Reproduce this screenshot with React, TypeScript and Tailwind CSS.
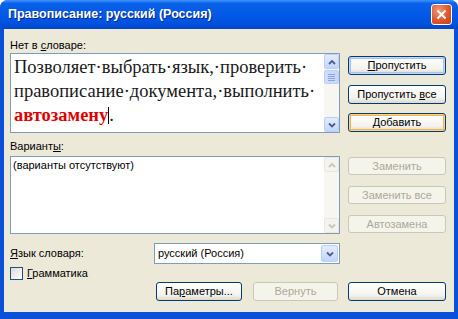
import type { ReactNode } from "react";

// XP-style spelling dialog

function Chevron({ dir, color }: { dir: "up" | "down"; color: string }) {
  return (
    <svg width="8" height="6" viewBox="0 0 8 6">
      <path
        d={dir === "up" ? "M1 5 L4 2 L7 5" : "M1 1.5 L4 4.5 L7 1.5"}
        fill="none"
        stroke={color}
        strokeWidth="1.8"
      />
    </svg>
  );
}

function ArrowBtn({ dir, disabled }: { dir: "up" | "down"; disabled?: boolean }) {
  return (
    <div
      className={
        disabled
          ? "h-[15px] flex items-center justify-center rounded-[2px] border border-[#e8e7e0] bg-[#f4f3ee]"
          : "h-[15px] flex items-center justify-center rounded-[2px] border border-[#bcd0f6] bg-[linear-gradient(180deg,#e4ecfd,#c3d5fc)]"
      }
    >
      <Chevron dir={dir} color={disabled ? "#c9c7ba" : "#4d6185"} />
    </div>
  );
}

function Scrollbar({ disabled }: { disabled?: boolean }) {
  return (
    <div className="w-[15px] shrink-0 flex flex-col bg-[#f7f6f1]">
      <ArrowBtn dir="up" disabled={disabled} />
      {!disabled && (
        <div className="h-[14px] mt-[1px] flex flex-col items-center justify-center gap-[1px] rounded-[2px] border border-[#bcd0f6] bg-[linear-gradient(90deg,#d0dcfc,#c6d6fc)]">
          <div className="w-[7px] h-[1px] bg-[#8ca4dc]" />
          <div className="w-[7px] h-[1px] bg-[#8ca4dc]" />
          <div className="w-[7px] h-[1px] bg-[#8ca4dc]" />
          <div className="w-[7px] h-[1px] bg-[#8ca4dc]" />
        </div>
      )}
      <div className="flex-1" />
      <ArrowBtn dir="down" disabled={disabled} />
    </div>
  );
}

function XpButton({
  children,
  kind = "normal",
  className = "",
}: {
  children: ReactNode;
  kind?: "normal" | "default" | "hover" | "disabled";
  className?: string;
}) {
  const base =
    "flex items-center justify-center rounded-[3px] border text-[11px] leading-none ";
  const styles = {
    normal:
      "border-[#003c74] text-black bg-[linear-gradient(180deg,#ffffff,#f4f3ee_70%,#dcd8cc)]",
    default:
      "border-[#003c74] text-black bg-[linear-gradient(180deg,#ffffff,#f4f3ee_70%,#dcd8cc)] shadow-[inset_0_0_0_1px_#c2d6f7,inset_0_0_0_2px_#a6c2f2]",
    hover:
      "border-[#003c74] text-black bg-[linear-gradient(180deg,#ffffff,#f4f3ee_70%,#dcd8cc)] shadow-[inset_0_0_0_1px_#fcd38a,inset_0_0_0_2px_#f3b34d]",
    disabled: "border-[#c9c7ba] text-[#aca899] bg-[#f5f4ea]",
  };
  return <div className={base + styles[kind] + " " + className}>{children}</div>;
}

export default function App() {
  return (
    <div
      className="w-[458px] h-[319px] bg-white"
      style={{ fontFamily: '"Liberation Sans", Arial, sans-serif' }}
    >
      <div className="w-full h-full flex flex-col rounded-t-[8px] overflow-hidden bg-[#0a50d8]">
        {/* Title bar */}
        <div className="h-[29px] flex items-center justify-between pl-[8px] pr-[6px] bg-[linear-gradient(180deg,#3d95ff_0%,#0a61e8_12%,#0058e6_55%,#0050dc_85%,#0046c8_100%)]">
          <span className="text-white font-bold text-[12.5px] [text-shadow:1px_1px_0_#0a2a80]">
            Правописание: русский (Россия)
          </span>
          <div className="w-[21px] h-[21px] rounded-[3px] border border-white flex items-center justify-center bg-[radial-gradient(circle_at_35%_30%,#f19a7a,#e0562c_55%,#c5401a)]">
            <svg width="11" height="11" viewBox="0 0 11 11">
              <path d="M1.5 1.5 L9.5 9.5 M9.5 1.5 L1.5 9.5" stroke="white" strokeWidth="2" />
            </svg>
          </div>
        </div>

        {/* Body */}
        <div className="flex-1 mx-[4px] mb-[7px] bg-[#ece9d8] pt-[9px] pl-[6px] pr-[8px] text-[11px] text-black">
          <div className="flex gap-[8px]">
            {/* left column */}
            <div className="w-[330px] flex flex-col">
              <div className="h-[14px] leading-[14px]">
                Нет в <span className="underline">с</span>ловаре:
              </div>
              <div className="mt-[1px] h-[80px] flex border border-[#7f9db9] bg-white">
                <div
                  className="flex-1 min-w-0 overflow-hidden pl-[3px] pt-[1px] text-[18.5px] leading-[24px] text-[#1a1a1a] whitespace-nowrap"
                  style={{ fontFamily: '"Liberation Serif", "Times New Roman", serif' }}
                >
                  <div>Позволяет·выбрать·язык,·проверить·</div>
                  <div>правописание·документа,·выполнить·</div>
                  <div className="flex items-center">
                    <span className="font-bold text-[#e00000]">автозамену</span>
                    <span className="w-[1px] h-[17px] bg-black" />
                    <span>.</span>
                  </div>
                </div>
                <Scrollbar />
              </div>

              <div className="mt-[6px] h-[14px] leading-[14px]">
                Вариант<span className="underline">ы</span>:
              </div>
              <div className="mt-[3px] h-[78px] flex border border-[#7f9db9] bg-white">
                <div className="flex-1 pl-[2px] pt-[1px] leading-[14px]">(варианты отсутствуют)</div>
                <Scrollbar disabled />
              </div>
            </div>

            {/* right column */}
            <div className="w-[98px] flex flex-col">
              <XpButton kind="default" className="mt-[18px] h-[19px]">
                <span className="underline">П</span>ропустить
              </XpButton>
              <XpButton className="mt-[10px] h-[19px]">
                Пропустить&nbsp;<span className="underline">в</span>се
              </XpButton>
              <XpButton kind="hover" className="mt-[9px] h-[19px]">
                <span className="underline">Д</span>обавить
              </XpButton>
              <XpButton kind="disabled" className="mt-[25px] h-[18px]">
                Заменить
              </XpButton>
              <XpButton kind="disabled" className="mt-[11px] h-[18px]">
                Заменить все
              </XpButton>
              <XpButton kind="disabled" className="mt-[11px] h-[18px]">
                Автозамена
              </XpButton>
            </div>
          </div>

          {/* language row */}
          <div className="mt-[9px] flex items-center h-[21px]">
            <div className="w-[144px]">
              <span className="underline">Я</span>зык словаря:
            </div>
            <div className="w-[186px] h-[21px] flex items-center border border-[#7f9db9] bg-white pl-[3px] pr-[1px]">
              <span className="flex-1">русский (Россия)</span>
              <div className="w-[17px] h-[17px] flex items-center justify-center rounded-[2px] border border-[#bcd0f6] bg-[linear-gradient(180deg,#e4ecfd,#c3d5fc)]">
                <Chevron dir="down" color="#4d6185" />
              </div>
            </div>
          </div>

          {/* checkbox row */}
          <div className="mt-[3px] flex items-center h-[13px]">
            <div className="w-[13px] h-[13px] border border-[#1c5180] bg-[linear-gradient(135deg,#dcdbd5,#ffffff)]" />
            <span className="ml-[4px]">
              <span className="underline">Г</span>рамматика
            </span>
          </div>

          {/* bottom buttons */}
          <div className="mt-[2px] flex h-[19px]">
            <XpButton className="ml-[146px] w-[86px]">
              Па<span className="underline">р</span>аметры...
            </XpButton>
            <XpButton kind="disabled" className="ml-[11px] w-[85px]">
              Вернуть
            </XpButton>
            <XpButton className="ml-[10px] w-[98px]">Отмена</XpButton>
          </div>
        </div>
      </div>
    </div>
  );
}
